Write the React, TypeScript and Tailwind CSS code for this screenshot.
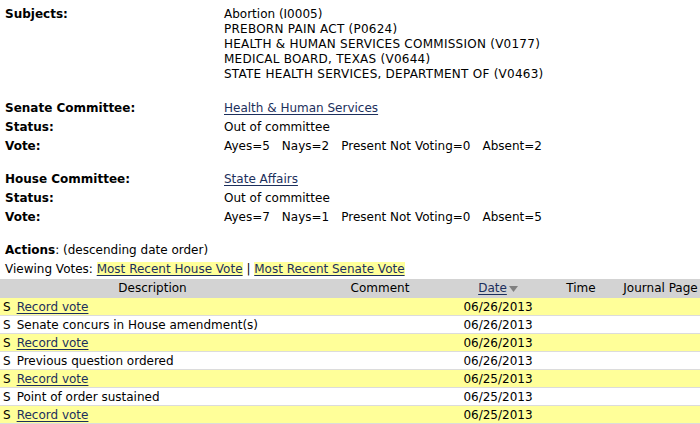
import React from "react";

const font = { fontFamily: '"DejaVu Sans", Verdana, sans-serif' };

const rows: { kind: "link" | "text"; text: string; date: string }[] = [
  { kind: "link", text: "Record vote", date: "06/26/2013" },
  { kind: "text", text: "Senate concurs in House amendment(s)", date: "06/26/2013" },
  { kind: "link", text: "Record vote", date: "06/26/2013" },
  { kind: "text", text: "Previous question ordered", date: "06/26/2013" },
  { kind: "link", text: "Record vote", date: "06/25/2013" },
  { kind: "text", text: "Point of order sustained", date: "06/25/2013" },
  { kind: "link", text: "Record vote", date: "06/25/2013" },
];

function Label({ children }: { children: React.ReactNode }) {
  return <div className="pl-[5px] font-bold">{children}</div>;
}

function Link({ children }: { children: React.ReactNode }) {
  return <span className="text-[#1c2f5c] underline underline-offset-2">{children}</span>;
}

export default function App() {
  return (
    <div className="w-[700px] h-[424px] overflow-hidden bg-white text-black text-[12px]" style={font}>
      <div className="grid grid-cols-[224px_1fr] pt-[7px] leading-[15px]">
        <Label>Subjects:</Label>
        <div>
          <div>Abortion (I0005)</div>
          <div className="tracking-[0.25px]">PREBORN PAIN ACT (P0624)</div>
          <div className="tracking-[0.25px]">HEALTH &amp; HUMAN SERVICES COMMISSION (V0177)</div>
          <div className="tracking-[0.25px]">MEDICAL BOARD, TEXAS (V0644)</div>
          <div className="tracking-[0.25px]">STATE HEALTH SERVICES, DEPARTMENT OF (V0463)</div>
        </div>
      </div>

      <div className="grid grid-cols-[224px_1fr] auto-rows-[19px] mt-[17px] leading-[19px]">
        <Label>Senate Committee:</Label>
        <div><Link>Health &amp; Human Services</Link></div>
        <Label>Status:</Label>
        <div>Out of committee</div>
        <Label>Vote:</Label>
        <div className="flex gap-[12px]">
          <span>Ayes=5</span><span>Nays=2</span><span>Present Not Voting=0</span><span>Absent=2</span>
        </div>
      </div>

      <div className="grid grid-cols-[224px_1fr] auto-rows-[19px] mt-[14px] leading-[19px]">
        <Label>House Committee:</Label>
        <div><Link>State Affairs</Link></div>
        <Label>Status:</Label>
        <div>Out of committee</div>
        <Label>Vote:</Label>
        <div className="flex gap-[12px]">
          <span>Ayes=7</span><span>Nays=1</span><span>Present Not Voting=0</span><span>Absent=5</span>
        </div>
      </div>

      <div className="mt-[14px] pl-[5px] leading-[19px]">
        <div><span className="font-bold">Actions</span>: (descending date order)</div>
        <div>
          Viewing Votes: <span className="bg-[#ffff99]"><Link>Most Recent House Vote</Link></span> |{" "}
          <span className="bg-[#ffff99]"><Link>Most Recent Senate Vote</Link></span>
        </div>
      </div>

      <div>
        <div className="grid grid-cols-[305px_150px_86px_80px_79px] h-[19px] leading-[19px] bg-[#d3d3d3] text-center">
          <div>Description</div>
          <div>Comment</div>
          <div className="flex items-center justify-center gap-[2px]">
            <Link>Date</Link>
            <svg width="9" height="6" viewBox="0 0 9 6"><path d="M0 0h9L4.5 6z" fill="#808080" /></svg>
          </div>
          <div>Time</div>
          <div>Journal Page</div>
        </div>
        {rows.map((r, i) => (
          <div
            key={i}
            className={
              "grid grid-cols-[305px_150px_86px_80px_79px] h-[18px] leading-[18px] border-b border-[#dcdcdc] " +
              (i % 2 === 0 ? "bg-[#ffff99]" : "bg-white")
            }
          >
            <div className="pl-[3px] flex gap-[6px]">
              <span>S</span>
              {r.kind === "link" ? <Link>{r.text}</Link> : <span>{r.text}</span>}
            </div>
            <div></div>
            <div className="text-center">{r.date}</div>
            <div></div>
            <div></div>
          </div>
        ))}
      </div>
    </div>
  );
}
